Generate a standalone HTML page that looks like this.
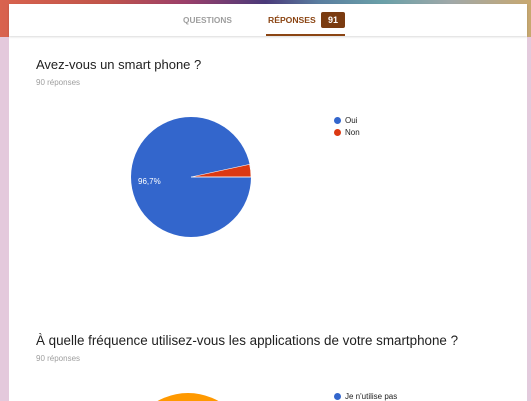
<!DOCTYPE html>
<html><head><meta charset="utf-8"><style>
*{margin:0;padding:0;box-sizing:border-box}
body{width:531px;height:401px;overflow:hidden;position:relative;background:#e4c9dc;font-family:"Liberation Sans",Arial,sans-serif}
.band{position:absolute;left:0;top:0;width:531px;height:37px;background:linear-gradient(90deg,#d9634e 0%,#c0544a 20%,#9b3f6a 35%,#4a3a7a 50%,#5a7ea0 60%,#6aa0a8 72%,#a0a8a8 85%,#c8a870 100%)}
.card{position:absolute;left:9px;top:4px;width:518px;height:397px;background:#fff}
.hdr{position:absolute;left:9px;top:4px;width:518px;height:32px;background:#fff;box-shadow:0 1px 2px rgba(0,0,0,.15)}
.tab{position:absolute;top:15px;font-size:8.3px;font-weight:bold;letter-spacing:0}
.badge{position:absolute;left:321px;top:12px;width:24px;height:16px;background:#7a3b10;color:#fff;font-size:9px;font-weight:bold;text-align:center;line-height:16px;border-radius:2px}
.ul{position:absolute;left:266px;top:34px;width:79px;height:2px;background:#8b4513}
.q{position:absolute;left:36px;font-size:13px;color:#212121;white-space:nowrap}
.n{position:absolute;left:36px;font-size:8px;color:#9e9e9e}
.lg{position:absolute;font-size:8px;color:#222;white-space:nowrap;height:9px;overflow:hidden}
.dot{display:inline-block;width:7px;height:7px;border-radius:50%;margin-right:4px;vertical-align:-1px}
</style></head><body>
<div class="band"></div>
<div class="card"></div>
<div class="hdr"></div>
<div class="tab" style="left:183px;color:#9e9e9e">QUESTIONS</div>
<div class="tab" style="left:268px;color:#8b4513;font-size:8.6px">RÉPONSES</div>
<div class="badge">91</div>
<div class="ul"></div>
<div class="q" style="top:57px">Avez-vous un smart phone ?</div>
<div class="n" style="top:78px">90 réponses</div>
<svg style="position:absolute;left:0;top:0" width="531" height="401">
<circle cx="191" cy="177" r="60" fill="#3366cc"/>
<path d="M191 177 L251 177 A60 60 0 0 0 249.6 164.3 Z" fill="#dc3912" stroke="#fff" stroke-width=".6"/>
<line x1="191" y1="177" x2="251" y2="177" stroke="#fff" stroke-width=".8"/>
<text x="138" y="184" font-size="8" fill="#fff" font-family="Liberation Sans">96,7%</text>
<circle cx="188" cy="455" r="62" fill="#ff9900"/>
</svg>
<div class="lg" style="left:334px;top:116px"><span class="dot" style="background:#3366cc"></span>Oui</div>
<div class="lg" style="left:334px;top:128px"><span class="dot" style="background:#dc3912"></span>Non</div>
<div class="q" style="top:333px;font-size:13.4px">À quelle fréquence utilisez-vous les applications de votre smartphone ?</div>
<div class="n" style="top:354px">90 réponses</div>
<div class="lg" style="left:334px;top:392px"><span class="dot" style="background:#3366cc"></span>Je n'utilise pas</div>
</body></html>
